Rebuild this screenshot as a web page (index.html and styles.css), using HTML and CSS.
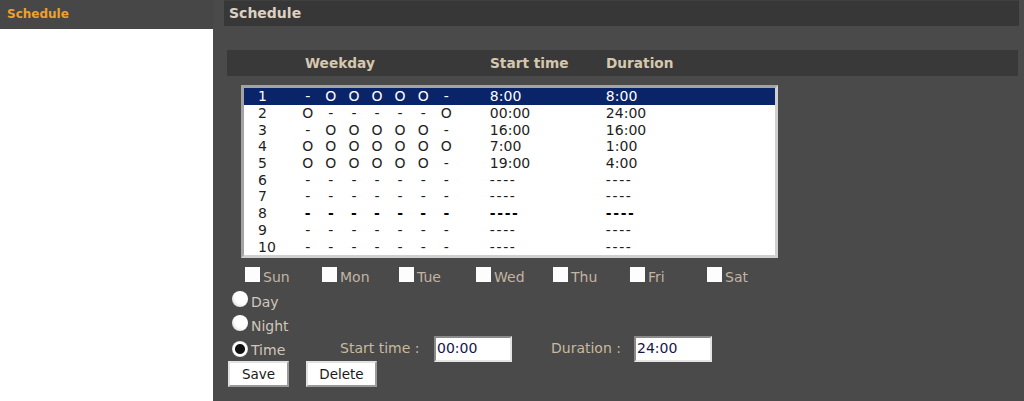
FILE: index.html
```html
<!DOCTYPE html>
<html>
<head>
<meta charset="utf-8">
<link rel="stylesheet" href="styles.css">
</head>
<body>
<div class="page">
  <aside class="sidebar">
    <div class="side-item">Schedule</div>
  </aside>
  <main class="main">
    <div class="title-bar">Schedule</div>
    <div class="head-bar">
      <span class="h-week">Weekday</span>
      <span class="h-start">Start time</span>
      <span class="h-dur">Duration</span>
    </div>
    <div class="listbox">
      <div class="row sel"><span class="n">1</span><span class="d">-</span><span class="d">O</span><span class="d">O</span><span class="d">O</span><span class="d">O</span><span class="d">O</span><span class="d">-</span><span class="s">8:00</span><span class="u">8:00</span></div>
      <div class="row"><span class="n">2</span><span class="d">O</span><span class="d">-</span><span class="d">-</span><span class="d">-</span><span class="d">-</span><span class="d">-</span><span class="d">O</span><span class="s">00:00</span><span class="u">24:00</span></div>
      <div class="row"><span class="n">3</span><span class="d">-</span><span class="d">O</span><span class="d">O</span><span class="d">O</span><span class="d">O</span><span class="d">O</span><span class="d">-</span><span class="s">16:00</span><span class="u">16:00</span></div>
      <div class="row"><span class="n">4</span><span class="d">O</span><span class="d">O</span><span class="d">O</span><span class="d">O</span><span class="d">O</span><span class="d">O</span><span class="d">O</span><span class="s">7:00</span><span class="u">1:00</span></div>
      <div class="row"><span class="n">5</span><span class="d">O</span><span class="d">O</span><span class="d">O</span><span class="d">O</span><span class="d">O</span><span class="d">O</span><span class="d">-</span><span class="s">19:00</span><span class="u">4:00</span></div>
      <div class="row"><span class="n">6</span><span class="d">-</span><span class="d">-</span><span class="d">-</span><span class="d">-</span><span class="d">-</span><span class="d">-</span><span class="d">-</span><span class="s dash">----</span><span class="u dash">----</span></div>
      <div class="row"><span class="n">7</span><span class="d">-</span><span class="d">-</span><span class="d">-</span><span class="d">-</span><span class="d">-</span><span class="d">-</span><span class="d">-</span><span class="s dash">----</span><span class="u dash">----</span></div>
      <div class="row dark"><span class="n">8</span><span class="d">-</span><span class="d">-</span><span class="d">-</span><span class="d">-</span><span class="d">-</span><span class="d">-</span><span class="d">-</span><span class="s dash">----</span><span class="u dash">----</span></div>
      <div class="row"><span class="n">9</span><span class="d">-</span><span class="d">-</span><span class="d">-</span><span class="d">-</span><span class="d">-</span><span class="d">-</span><span class="d">-</span><span class="s dash">----</span><span class="u dash">----</span></div>
      <div class="row"><span class="n">10</span><span class="d">-</span><span class="d">-</span><span class="d">-</span><span class="d">-</span><span class="d">-</span><span class="d">-</span><span class="d">-</span><span class="s dash">----</span><span class="u dash">----</span></div>
    </div>
    <div class="days">
      <label class="day"><span class="cb"></span>Sun</label>
      <label class="day"><span class="cb"></span>Mon</label>
      <label class="day"><span class="cb"></span>Tue</label>
      <label class="day"><span class="cb"></span>Wed</label>
      <label class="day"><span class="cb"></span>Thu</label>
      <label class="day"><span class="cb"></span>Fri</label>
      <label class="day"><span class="cb"></span>Sat</label>
    </div>
    <div class="radio-row"><span class="rd"></span><span class="rl">Day</span></div>
    <div class="radio-row"><span class="rd"></span><span class="rl">Night</span></div>
    <div class="radio-row"><span class="rd on"></span><span class="rl rl-time">Time</span>
      <span class="fl fl-start">Start time :</span><span class="tin">00:00</span>
      <span class="fl fl-dur">Duration :</span><span class="tin">24:00</span>
    </div>
    <div class="btns">
      <button class="btn btn-save">Save</button>
      <button class="btn btn-del">Delete</button>
    </div>
  </main>
</div>
</body>
</html>
```

FILE: styles.css
```css
html, body {
  margin: 0;
  padding: 0;
  height: 100%;
  background: #4a4a4a;
  font-family: "DejaVu Sans", Verdana, sans-serif;
}
.page {
  display: flex;
  height: 401px;
  overflow: hidden;
}
.sidebar {
  width: 213px;
  flex: none;
  background: #ffffff;
}
.side-item {
  height: 29px;
  background: #474747;
  color: #f0a02a;
  font-weight: bold;
  font-size: 12px;
  line-height: 29px;
  padding-left: 7px;
}
.main {
  flex: 1;
  padding: 0 5px 0 11px;
  background: #4a4a4a;
}
.title-bar {
  height: 26px;
  background: #373737;
  border-top: 1px solid #3f3f3f;
  box-sizing: border-box;
  color: #ddd0c2;
  font-weight: bold;
  font-size: 14px;
  line-height: 24px;
  padding-left: 5px;
}
.head-bar {
  margin: 24px 1px 0 3px;
  height: 26px;
  background: #393939;
  display: flex;
  align-items: center;
  color: #d6c7ad;
  font-weight: bold;
  font-size: 13.7px;
}
.h-week { margin-left: 78px; width: 185px; }
.h-start { width: 116px; }
.listbox {
  margin: 9px 0 0 17px;
  width: 537px;
  height: 173px;
  box-sizing: border-box;
  background: #ffffff;
  border: 3px solid #cfcfcf;
  border-top-color: #a3a3a3;
  border-left-color: #a3a3a3;
}
.row {
  height: 16.7px;
  display: grid;
  grid-template-columns: 38.2px repeat(7, 23.1px) 148px 1fr;
  padding-left: 14px;
  align-items: center;
  font-size: 14px;
  line-height: 16px;
  color: #1e1e1e;
}
.row .d { text-align: center; }
.row .s { padding-left: 32px; }
.row .dash { letter-spacing: 1.6px; }
.row.sel {
  background: #0a246a;
  color: #ffffff;
}
.row.dark { color: #000; font-weight: bold; }
.row.dark .n { font-weight: normal; color: #1e1e1e; }
.days {
  display: flex;
  height: 30px;
  padding-top: 8px;
  box-sizing: border-box;
  align-items: center;
  margin-left: 21px;
}
.day {
  width: 77px;
  display: flex;
  align-items: center;
  color: #c2b4a2;
  font-size: 14px;
}
.cb {
  width: 15px;
  height: 15px;
  background: #fdfdfd;
  margin-right: 3px;
  position: relative;
  top: -3px;
}
.radio-row {
  height: 24px;
  display: flex;
  align-items: center;
  margin-left: 8px;
}
.rd {
  width: 16px;
  height: 16px;
  border-radius: 50%;
  background: radial-gradient(circle at 62% 38%, #ffffff 50%, #bdbdbd 100%);
  flex: none;
  position: relative;
  top: -1px;
}
.rd.on {
  background: radial-gradient(circle at 50% 50%, #111 0, #111 4.5px, #ffffff 5.5px, #ffffff 7px, #cfcfcf 8px);
  top: 1px;
}
.rl {
  margin-left: 3px;
  color: #d0c6bc;
  font-size: 14px;
  position: relative;
  top: 2px;
}
.rl-time {
  width: 89px;
}
.fl {
  color: #c9b99e;
  font-size: 14px;
}
.fl-start { width: 94px; }
.fl-dur { margin-left: 39px; width: 83px; }
.tin {
  width: 78px;
  height: 26px;
  box-sizing: border-box;
  background: #ffffff;
  border: 2px solid #e4e4e4;
  border-top-color: #8a8a8a;
  border-left-color: #8a8a8a;
  color: #15154a;
  font-size: 14px;
  line-height: 21px;
  padding-left: 1px;
  position: relative;
  top: 1px;
}
.btns {
  display: flex;
  margin-left: 4px;
  margin-top: 1px;
}
.btn {
  height: 26px;
  box-sizing: border-box;
  background: #ffffff;
  border: 2px solid #e2e2e2;
  border-right-color: #9a9a9a;
  border-bottom-color: #9a9a9a;
  font-family: "DejaVu Sans", Verdana, sans-serif;
  font-size: 13.5px;
  color: #1a1a1a;
  padding: 0;
}
.btn-save { width: 61px; }
.btn-del { width: 71px; margin-left: 17px; }
```
